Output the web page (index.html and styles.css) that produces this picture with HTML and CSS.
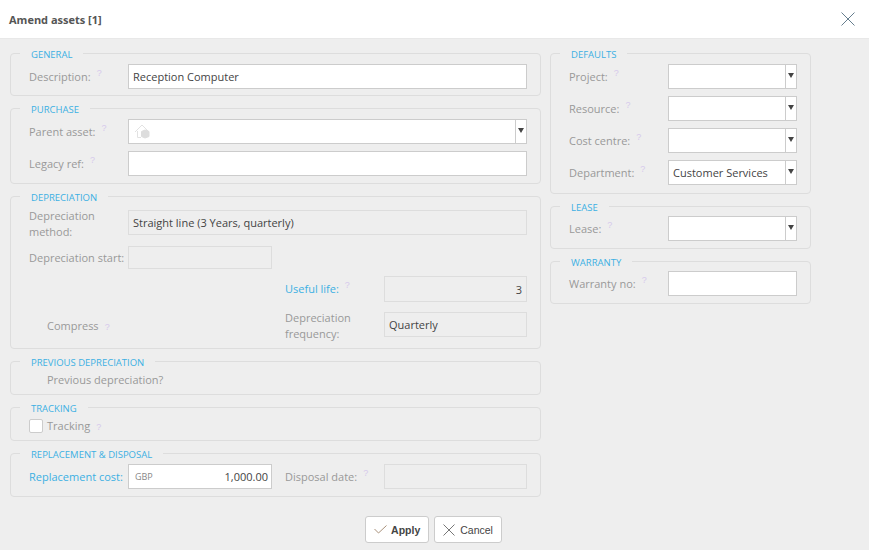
FILE: index.html
```html
<!DOCTYPE html>
<html lang="en">
<head>
    <meta charset="UTF-8">
    <meta name="viewport" content="width=device-width, initial-scale=1.0">
    <title>Amend assets</title>
    <link rel="stylesheet" href="styles.css">
</head>
<body>
    <div class="header">
        <span class="title">Amend assets [1]</span>
        <svg class="close" width="14" height="14" viewBox="0 0 14 14"><path d="M0.5 0.5 L13.5 13.5 M13.5 0.5 L0.5 13.5"/></svg>
    </div>

    <div class="columns">
        <div class="col-left">
            <fieldset class="group pad-6">
                <legend>General</legend>
                <div class="row first">
                    <div class="label">Description:<sup>?</sup></div>
                    <div class="box">Reception Computer</div>
                </div>
            </fieldset>

            <fieldset class="group">
                <legend>Purchase</legend>
                <div class="row first">
                    <div class="label">Parent asset:<sup>?</sup></div>
                    <div class="box select">
                        <svg class="house" width="16" height="15" viewBox="0 0 16 15"><path class="roof" d="M1 8 L8 1 L15 8 M3.5 7 V13.5 H7"/><path class="crate" d="M7.5 7.5 L11 6 L15 7.5 V12.5 L11 14 L7.5 12.5 Z"/></svg>
                        <span class="arrow"></span>
                    </div>
                </div>
                <div class="row gap">
                    <div class="label">Legacy ref:<sup>?</sup></div>
                    <div class="box"></div>
                </div>
            </fieldset>

            <fieldset class="group pad-6">
                <legend>Depreciation</legend>
                <div class="dep-grid">
                    <div class="label two-line">Depreciation method:</div>
                    <div class="box off span-wide">Straight line (3 Years, quarterly)</div>
                    <div class="label dep-start">Depreciation start:</div>
                    <div class="box off dep-start short"></div>
                    <div class="label link dep-life">Useful life:<sup>?</sup></div>
                    <div class="box off num dep-life tall">3</div>
                    <div class="label compress dep-freq">Compress<sup class="inline">?</sup></div>
                    <div class="label two-line dep-freq right-label">Depreciation frequency:</div>
                    <div class="box off dep-freq right-box">Quarterly</div>
                </div>
            </fieldset>

            <fieldset class="group pad-6">
                <legend>Previous depreciation</legend>
                <div class="label plain">Previous depreciation?</div>
            </fieldset>

            <fieldset class="group pad-5">
                <legend>Tracking</legend>
                <div class="track-row">
                    <span class="check"></span>
                    <span class="label">Tracking<sup class="inline">?</sup></span>
                </div>
            </fieldset>

            <fieldset class="group">
                <legend>Replacement &amp; disposal</legend>
                <div class="cost-row">
                    <div class="label link">Replacement cost:</div>
                    <div class="box money"><span class="currency">GBP</span><span>1,000.00</span></div>
                    <div class="spacer"></div>
                    <div class="label">Disposal date:<sup>?</sup></div>
                    <div class="box off"></div>
                </div>
            </fieldset>
        </div>

        <div class="col-right">
            <fieldset class="group pad-8">
                <legend>Defaults</legend>
                <div class="row first">
                    <div class="label">Project:<sup>?</sup></div>
                    <div class="box select"><span class="arrow"></span></div>
                </div>
                <div class="row gap">
                    <div class="label">Resource:<sup>?</sup></div>
                    <div class="box select"><span class="arrow"></span></div>
                </div>
                <div class="row gap">
                    <div class="label">Cost centre:<sup>?</sup></div>
                    <div class="box select"><span class="arrow"></span></div>
                </div>
                <div class="row gap">
                    <div class="label">Department:<sup>?</sup></div>
                    <div class="box select">Customer Services<span class="arrow"></span></div>
                </div>
            </fieldset>

            <fieldset class="group">
                <legend>Lease</legend>
                <div class="row first-small">
                    <div class="label">Lease:<sup>?</sup></div>
                    <div class="box select"><span class="arrow"></span></div>
                </div>
            </fieldset>

            <fieldset class="group">
                <legend>Warranty</legend>
                <div class="row first-small">
                    <div class="label">Warranty no:<sup>?</sup></div>
                    <div class="box"></div>
                </div>
            </fieldset>
        </div>
    </div>

    <div class="footer">
        <button class="btn apply"><svg width="13" height="9" viewBox="0 0 13 9"><path d="M0.5 4 L4.5 8 L12.5 0.5"/></svg>Apply</button>
        <button class="btn cancel"><svg width="12" height="12" viewBox="0 0 12 12"><path d="M0.5 0.5 L11.5 11.5 M11.5 0.5 L0.5 11.5"/></svg>Cancel</button>
    </div>
</body>
</html>
```

FILE: styles.css
```css
* {
    box-sizing: border-box;
}

body {
    margin: 0;
    height: 550px;
    overflow: hidden;
    background-color: #eeeeee;
    font-family: "Open Sans", Arial, sans-serif;
    font-size: 11px;
    color: #444;
}

.header {
    display: flex;
    justify-content: space-between;
    align-items: center;
    height: 39px;
    padding: 0 14px 0 9px;
    background-color: white;
    border-bottom: 1px solid #e8e8e8;
}

.title {
    margin-top: 1px;
    font-size: 11px;
    font-weight: 700;
    color: #555;
}

.close {
    margin-bottom: 1px;
}

.close path {
    fill: none;
    stroke: #667e8e;
    stroke-width: 1;
}

.columns {
    display: flex;
    gap: 9px;
    padding: 8px 10px 0;
}

.col-left {
    width: 531px;
}

.col-right {
    width: 261px;
}

.group {
    margin: 0 0 6px;
    padding: 0 13px 7px 18px;
    border: 1px solid #dddddd;
    border-radius: 4px;
    min-width: 0;
}

.pad-5 {
    padding-bottom: 5px;
}

.pad-6 {
    padding-bottom: 6px;
}

.pad-8 {
    padding-bottom: 8px;
}

.group legend {
    margin-left: -9px;
    padding: 0 11px;
    height: 12px;
    line-height: 15px;
    font-size: 9.5px;
    text-transform: uppercase;
    color: #3cb0e3;
}

.row {
    display: grid;
    grid-template-columns: 99px 1fr;
    align-items: center;
}

.row.first {
    margin-top: 5px;
}

.row.first-small {
    margin-top: 4px;
}

.row.gap {
    margin-top: 7px;
}

.col-right .row {
    grid-template-columns: 99px 129px;
}

.label {
    line-height: 16px;
    color: #999;
}

.label sup {
    margin-left: 6px;
    font-family: "Liberation Sans", Arial, sans-serif;
    font-size: 9px;
    line-height: 0;
    vertical-align: 5px;
    color: #d6caec;
}

.label sup.inline {
    vertical-align: baseline;
}

.link {
    color: #3cb0e3;
}

.box {
    position: relative;
    display: flex;
    align-items: center;
    height: 25px;
    padding: 0 4px;
    background-color: white;
    border: 1px solid #cccccc;
    color: #444;
}

.box.tall {
    height: 26px;
}

.box.off {
    background-color: #eeeeee;
    border-color: #dddddd;
}

.box.short {
    height: 23px;
}

.num {
    justify-content: flex-end;
}

.arrow {
    position: absolute;
    top: 0;
    right: 0;
    bottom: 0;
    width: 11px;
    background-color: white;
    border-left: 1px solid #cccccc;
}

.arrow::after {
    content: "";
    position: absolute;
    top: 8px;
    left: 2px;
    border-left: 3px solid transparent;
    border-right: 3px solid transparent;
    border-top: 5px solid #444;
}

.house {
    margin-left: 1px;
}

.house .roof {
    fill: none;
    stroke: #e2e2e2;
    stroke-width: 1;
}

.house .crate {
    fill: #dddddd;
    stroke: #dddddd;
}

.dep-grid {
    display: grid;
    grid-template-columns: 99px 144px 13px 99px 143px;
    margin-top: 6px;
    align-items: center;
}

.span-wide {
    grid-column: 2 / 6;
    align-self: start;
    margin-top: 2px;
}

.two-line {
    width: 92px;
}

.dep-start {
    margin-top: 6px;
}

.dep-start.label {
    grid-row: 2;
    grid-column: 1;
    white-space: nowrap;
}

.dep-start.box {
    grid-row: 2;
    grid-column: 2;
}

.dep-life {
    grid-row: 3;
    margin-top: 7px;
}

.dep-life.label {
    grid-column: 4;
}

.dep-life.box {
    grid-column: 5;
}

.dep-freq {
    grid-row: 4;
    margin-top: 8px;
}

.compress {
    grid-column: 1 / 3;
    padding-left: 18px;
}

.right-label {
    grid-column: 4;
}

.right-box {
    grid-column: 5;
    align-self: start;
    margin-top: 10px;
}

.plain {
    margin-top: 5px;
    padding-left: 18px;
}

.track-row {
    display: flex;
    align-items: center;
    gap: 4px;
    height: 18px;
    margin-top: 4px;
}

.check {
    width: 14px;
    height: 14px;
    background-color: white;
    border: 1px solid #cccccc;
    border-radius: 2px;
}

.cost-row {
    display: grid;
    grid-template-columns: 99px 144px 13px 99px 143px;
    align-items: center;
    margin-top: 5px;
}

.money {
    justify-content: space-between;
    padding: 0 3px 0 6px;
}

.currency {
    font-size: 9px;
    color: #888;
}

.footer {
    display: flex;
    justify-content: center;
    gap: 5px;
    margin-top: 13px;
    padding-right: 2px;
}

.btn {
    display: flex;
    align-items: center;
    gap: 4px;
    height: 27px;
    padding: 0 8px;
    background-color: white;
    border: 1px solid #cccccc;
    border-radius: 3px;
    font-family: "Liberation Sans", Arial, sans-serif;
    font-size: 10.5px;
    color: #444;
}

.btn.apply {
    font-weight: 700;
}

.btn.cancel {
    gap: 5px;
}

.btn path {
    fill: none;
    stroke: #777;
    stroke-width: 1;
}

.btn.apply path {
    stroke: #a8907a;
}
```
